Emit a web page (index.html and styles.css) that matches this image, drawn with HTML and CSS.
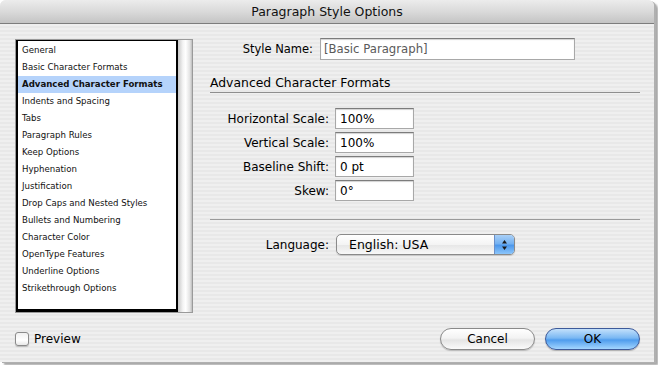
FILE: index.html
```html
<!DOCTYPE html>
<html>
<head>
<meta charset="utf-8">
<link rel="stylesheet" href="styles.css">
</head>
<body>
<div class="window">
  <div class="titlebar">Paragraph Style Options</div>
  <div class="content">
    <div class="sidebar">
      <div class="listframe">
        <ul class="list">
          <li>General</li>
          <li>Basic Character Formats</li>
          <li class="sel">Advanced Character Formats</li>
          <li>Indents and Spacing</li>
          <li>Tabs</li>
          <li>Paragraph Rules</li>
          <li>Keep Options</li>
          <li>Hyphenation</li>
          <li>Justification</li>
          <li>Drop Caps and Nested Styles</li>
          <li>Bullets and Numbering</li>
          <li>Character Color</li>
          <li>OpenType Features</li>
          <li>Underline Options</li>
          <li>Strikethrough Options</li>
        </ul>
        <div class="track"></div>
      </div>
    </div>
    <div class="main">
      <div class="namerow">
        <label class="namelabel">Style Name:</label>
        <div class="field namefield">[Basic Paragraph]</div>
      </div>
      <div class="heading">Advanced Character Formats</div>
      <div class="fields">
        <div class="row"><label class="lbl">Horizontal Scale:</label><div class="field small">100%</div></div>
        <div class="row"><label class="lbl">Vertical Scale:</label><div class="field small">100%</div></div>
        <div class="row"><label class="lbl">Baseline Shift:</label><div class="field small">0 pt</div></div>
        <div class="row"><label class="lbl">Skew:</label><div class="field small">0°</div></div>
      </div>
      <div class="sep"></div>
      <div class="row langrow">
        <label class="lbl">Language:</label>
        <div class="popup">
          <span class="popuptext">English: USA</span>
          <span class="stepper">
            <svg width="7" height="12" viewBox="0 0 7 12"><path d="M3.5 1 L6 4.5 H1 Z" fill="#1a1a1a"/><path d="M3.5 11 L6 7.5 H1 Z" fill="#1a1a1a"/></svg>
          </span>
        </div>
      </div>
    </div>
  </div>
  <div class="footer">
    <label class="preview"><span class="checkbox"></span>Preview</label>
    <div class="buttons">
      <div class="btn cancel">Cancel</div>
      <div class="btn ok">OK</div>
    </div>
  </div>
</div>
</body>
</html>
```
FILE: styles.css
```css
html, body {
  margin: 0;
  padding: 0;
  background: #ffffff;
}
body {
  width: 658px;
  height: 365px;
  overflow: hidden;
  font-family: "DejaVu Sans", "Liberation Sans", sans-serif;
  color: #000;
}
.window {
  width: 654px;
  height: 362px;
  border-radius: 6px 6px 0 0;
  background-color: #ececec;
  background-image: repeating-linear-gradient(to bottom, #efefef 0px, #efefef 2px, #e8e8e8 2px, #e8e8e8 4px);
  box-shadow: 2px 1px 0 #b0b0b0, 4px 3px 2px rgba(0,0,0,0.35);
  display: flex;
  flex-direction: column;
  position: relative;
}
.titlebar {
  height: 23px;
  border-bottom: 1px solid #7d7d7d;
  border-radius: 6px 6px 0 0;
  background: linear-gradient(to bottom, #ececec 0%, #dadada 50%, #c4c4c4 100%);
  font-size: 12.5px;
  line-height: 24px;
  text-align: center;
  color: #111;
  flex: none;
}
.content {
  display: flex;
  flex: none;
  height: 289px;
}
.sidebar {
  padding: 15px 0 0 15px;
  width: 178px;
  flex: none;
}
.listframe {
  display: flex;
  width: 178px;
  height: 274px;
  box-sizing: border-box;
  border: 1px solid #9a9a9a;
  background: #fff;
}
.list {
  list-style: none;
  margin: 0;
  padding: 1px 0 0 0;
  width: 162px;
  box-sizing: border-box;
  border: 2px solid #000;
  border-top-width: 1px;
  border-bottom-width: 3px;
  background: #fff;
  flex: none;
}
.list li {
  height: 17px;
  line-height: 17px;
  font-size: 8.6px;
  padding-left: 4px;
  white-space: nowrap;
  color: #111;
}
.list li.sel {
  background: #b5d3fb;
  font-weight: bold;
}
.track {
  flex: 1;
  background: linear-gradient(to right, #c8c8c8 0%, #f4f4f4 35%, #ffffff 55%, #e2e2e2 85%, #bdbdbd 100%);
}
.main {
  padding: 14px 0 0 17px;
  width: 430px;
  flex: none;
}
.namerow {
  display: flex;
  align-items: center;
  gap: 7px;
}
.namelabel {
  width: 103px;
  text-align: right;
  font-size: 11.5px;
  white-space: nowrap;
}
.field {
  box-sizing: border-box;
  background: #fff;
  border: 1px solid #a8a8a8;
  border-top-color: #7c7c7c;
  box-shadow: inset 0 1px 1px rgba(0,0,0,0.18);
  font-size: 12px;
  padding-left: 4px;
  display: flex;
  align-items: center;
}
.namefield {
  width: 255px;
  height: 22px;
  color: #5a5a5a;
  font-size: 11.7px;
  padding-left: 3px;
}
.heading {
  margin-top: 15px;
  font-size: 12.4px;
  line-height: 16px;
  border-bottom: 1px solid #8e8e8e;
  padding-bottom: 1px;
  width: 430px;
}
.fields {
  margin-top: 15px;
  display: flex;
  flex-direction: column;
  gap: 3px;
}
.row {
  display: flex;
  align-items: center;
  gap: 6px;
}
.lbl {
  width: 119px;
  text-align: right;
  font-size: 12px;
  white-space: nowrap;
}
.small {
  width: 79px;
  height: 21px;
}
.sep {
  margin-top: 18px;
  width: 430px;
  height: 1px;
  background: #9a9a9a;
}
.langrow {
  margin-top: 14px;
  gap: 7px;
}
.popup {
  width: 179px;
  height: 21px;
  box-sizing: border-box;
  border: 1px solid #8a8a8a;
  border-radius: 5px;
  background: linear-gradient(to bottom, #ffffff 0%, #f4f4f4 50%, #e6e6e6 51%, #f8f8f8 100%);
  display: flex;
  align-items: center;
  overflow: hidden;
  box-shadow: 0 1px 1px rgba(0,0,0,0.15);
}
.popuptext {
  flex: 1;
  padding-left: 12px;
  font-size: 12.5px;
}
.stepper {
  width: 19px;
  height: 100%;
  display: flex;
  align-items: center;
  justify-content: center;
  border-left: 1px solid #6a8fc8;
  background: linear-gradient(to bottom, #a9d0f7 0%, #75b2f2 45%, #4d98ec 55%, #8cc6fb 100%);
}
.footer {
  display: flex;
  align-items: center;
  justify-content: space-between;
  padding: 15px 14px 0 15px;
}
.preview {
  display: flex;
  align-items: center;
  gap: 5px;
  font-size: 12px;
}
.checkbox {
  width: 14px;
  height: 14px;
  box-sizing: border-box;
  border: 1px solid #8a8a8a;
  border-radius: 3px;
  background: linear-gradient(to bottom, #f0f0f0, #ffffff 60%, #e8e8e8);
  box-shadow: 0 1px 1px rgba(0,0,0,0.2);
}
.buttons {
  display: flex;
  gap: 10px;
}
.btn {
  width: 95px;
  height: 22px;
  box-sizing: border-box;
  border-radius: 11px;
  display: flex;
  align-items: center;
  justify-content: center;
  font-size: 12px;
}
.cancel {
  border: 1px solid #8a8a8a;
  background: linear-gradient(to bottom, #ffffff 0%, #f3f3f3 45%, #e4e4e4 55%, #fbfbfb 100%);
  box-shadow: 0 1px 1px rgba(0,0,0,0.2);
}
.ok {
  border: 1px solid #3d5a9a;
  background: linear-gradient(to bottom, #c3e0fb 0%, #7ab8f3 45%, #4f9ced 55%, #a3d6ff 100%);
  box-shadow: 0 1px 1px rgba(0,0,0,0.25);
}
```
